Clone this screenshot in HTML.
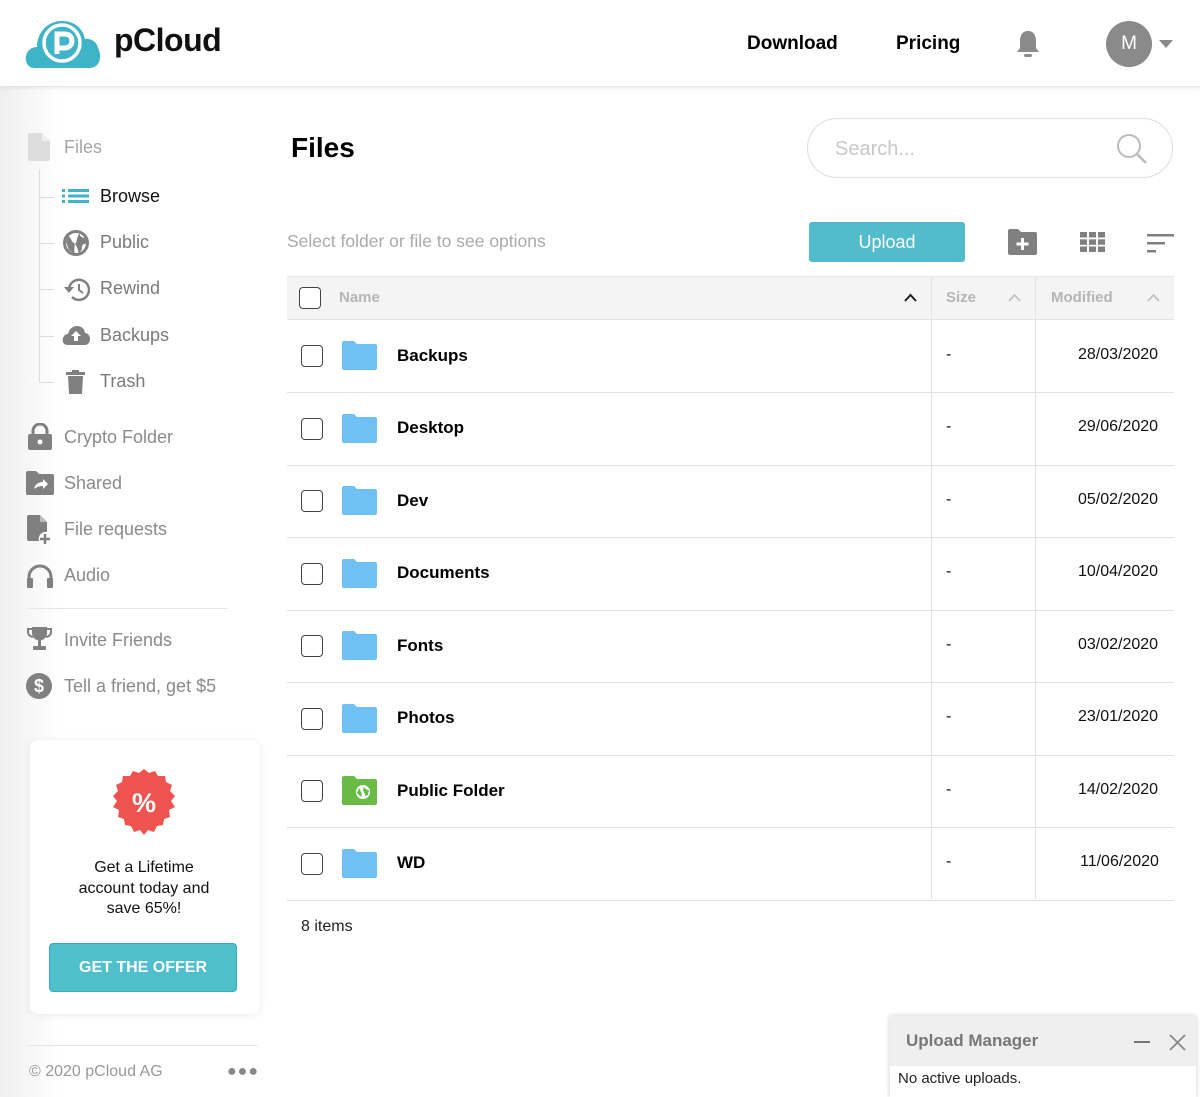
<!DOCTYPE html>
<html><head><meta charset="utf-8"><style>
*{margin:0;padding:0;box-sizing:border-box}
body{width:1200px;height:1097px;overflow:hidden;font-family:"Liberation Sans",sans-serif;background:#fff;position:relative;color:#000}
.a{position:absolute}
.hdr{left:0;top:0;width:1200px;height:87px;background:#fff;border-bottom:1px solid #e6e6e6;box-shadow:0 2px 3px rgba(0,0,0,.06);z-index:2}
.side{left:0;top:87px;width:60px;height:1010px;background:linear-gradient(90deg,#efefef,#fff)}
.nav{font-size:18px;color:#8a8a8a}
.nav.sub{color:#7a7a7a}
.th{font-size:15px;font-weight:bold;color:#b5b5b5}
.cb{width:22px;height:22px;border:1.5px solid #444;border-radius:4px;background:#fff}
.row{left:287px;width:887px;height:73px;border-bottom:1px solid #e3e3e3}
.fn{font-size:17px;font-weight:bold}
.dt{font-size:16px;color:#111}
</style></head><body>
<div class="a side"></div>
<div class="a hdr">
<svg class="a" style="left:25px;top:19px" width="76" height="50" viewBox="0 0 76 50"><path d="M10 49 C2 49 0 42 1 37 C2 31 7 28 12 28 C12 14 22 2 37 2 C50 2 58 10 60 20 C66 19 72 23 73 29 C76 34 76 42 72 46 C70 48 67 49 64 49 Z" fill="#3fb4c8"/><circle cx="37" cy="24" r="18" fill="none" stroke="#fff" stroke-width="3.5"/><path d="M32 35 V15 H39 C45 15 47 18 47 22 C47 26 44 29 39 29 H34" fill="none" stroke="#fff" stroke-width="5"/></svg>
<div class="a" style="left:114px;top:22px;font-size:32px;font-weight:bold;color:#111;letter-spacing:-0.5px">pCloud</div>
<div class="a" style="left:747px;top:33px;font-size:19px;font-weight:bold">Download</div>
<div class="a" style="left:896px;top:33px;font-size:19px;font-weight:bold">Pricing</div>
<svg class="a" style="left:1015px;top:29px" width="26" height="30" viewBox="0 0 26 30"><path d="M13 2 C7 2 5 7 5 12 V19 L2 23 H24 L21 19 V12 C21 7 19 2 13 2Z" fill="#8a8a8a"/><rect x="9" y="25" width="8" height="3" rx="1.5" fill="#8a8a8a"/></svg>
<div class="a" style="left:1106px;top:21px;width:46px;height:46px;border-radius:50%;background:#8a8a8a;color:#fff;font-size:19px;text-align:center;line-height:46px">M</div>
<svg class="a" style="left:1159px;top:40px" width="14" height="8"><path d="M0 0H14L7 8Z" fill="#8a8a8a"/></svg>
</div>

<!-- sidebar -->
<svg class="a" style="left:28px;top:133px" width="22" height="28"><path d="M2 0H14L22 8V26Q22 28 20 28H2Q0 28 0 26V2Q0 0 2 0Z" fill="#ddd"/><path d="M14 0V8H22" fill="#eee"/></svg>
<div class="a nav" style="left:64px;top:137px;color:#a5a5a5">Files</div>
<div class="a" style="left:39px;top:169px;width:1px;height:214px;background:#ddd"></div>
<div class="a" style="left:40px;top:197px;width:14px;height:1px;background:#ddd"></div>
<div class="a" style="left:40px;top:243px;width:14px;height:1px;background:#ddd"></div>
<div class="a" style="left:40px;top:289px;width:14px;height:1px;background:#ddd"></div>
<div class="a" style="left:40px;top:336px;width:14px;height:1px;background:#ddd"></div>
<div class="a" style="left:40px;top:382px;width:14px;height:1px;background:#ddd"></div>
<svg class="a" style="left:62px;top:189px" width="27" height="14"><g fill="#3fb4c8"><rect x="0" y="0" width="3" height="3"/><rect x="0" y="5.5" width="3" height="3"/><rect x="0" y="11" width="3" height="3"/><rect x="6" y="0" width="21" height="3"/><rect x="6" y="5.5" width="21" height="3"/><rect x="6" y="11" width="21" height="3"/></g></svg>
<div class="a nav" style="left:100px;top:186px;color:#111">Browse</div>
<svg class="a" style="left:63px;top:230px" width="26" height="26" viewBox="0 0 26 26"><circle cx="13" cy="13" r="11.5" fill="none" stroke="#808080" stroke-width="3"/><path d="M5 6 C9 8 8 12 11 13 C13 15 10 19 12 24 L6 20 L3 12Z M17 3 C16 6 19 8 23 8 L24 14 C21 13 18 15 19 19 L16 24 C15 20 14 16 12 14 C15 11 13 7 17 3Z" fill="#808080"/></svg>
<div class="a nav sub" style="left:100px;top:232px">Public</div>
<svg class="a" style="left:63px;top:277px" width="27" height="25" viewBox="0 0 27 25"><path d="M6 12 A10 10 0 1 1 9 20" fill="none" stroke="#808080" stroke-width="2.5"/><path d="M1 10 L6 16 L11 10Z" fill="#808080"/><path d="M16 7 V13 L20 16" fill="none" stroke="#808080" stroke-width="2"/></svg>
<div class="a nav sub" style="left:100px;top:278px">Rewind</div>
<svg class="a" style="left:62px;top:325px" width="28" height="20" viewBox="0 0 28 20"><path d="M6 20 C1 20 0 16 1 13 C2 10 4 9 6 9 C7 4 11 1 15 1 C20 1 23 5 23 8 C26 8 28 11 28 14 C28 17 26 20 23 20Z" fill="#808080"/><path d="M14 6 L19 11 H16 V16 H12 V11 H9Z" fill="#fff"/></svg>
<div class="a nav sub" style="left:100px;top:325px">Backups</div>
<svg class="a" style="left:66px;top:370px" width="19" height="24"><rect x="0" y="2" width="19" height="3" fill="#808080"/><rect x="6" y="0" width="7" height="3" fill="#808080"/><path d="M2 6H17L16 24H3Z" fill="#808080"/></svg>
<div class="a nav sub" style="left:100px;top:371px">Trash</div>

<svg class="a" style="left:28px;top:423px" width="24" height="27"><path d="M5 12V8A7 7 0 0 1 19 8V12" fill="none" stroke="#808080" stroke-width="3"/><rect x="0" y="11" width="24" height="16" rx="2" fill="#808080"/><circle cx="12" cy="19" r="2.5" fill="#fff"/></svg>
<div class="a nav" style="left:64px;top:427px">Crypto Folder</div>
<svg class="a" style="left:26px;top:471px" width="28" height="24"><path d="M0 2Q0 0 2 0H10L13 3H26Q28 3 28 5V22Q28 24 26 24H2Q0 24 0 22Z" fill="#808080"/><path d="M8 18 C9 13 13 11 17 11 V8 L22 13 L17 18 V15 C13 15 11 16 8 18Z" fill="#fff"/></svg>
<div class="a nav" style="left:64px;top:473px">Shared</div>
<svg class="a" style="left:27px;top:515px" width="25" height="30"><path d="M2 0H13L20 7V17A7 7 0 0 0 12 26H2Q0 26 0 24V2Q0 0 2 0Z" fill="#808080"/><path d="M13 0V7H20" fill="#bbb"/><path d="M18 19V29M13 24H23" stroke="#808080" stroke-width="2.5"/></svg>
<div class="a nav" style="left:64px;top:519px">File requests</div>
<svg class="a" style="left:26px;top:564px" width="28" height="24"><path d="M3 18V13A11 11 0 0 1 25 13V18" fill="none" stroke="#808080" stroke-width="3"/><rect x="1" y="14" width="6" height="10" rx="1" fill="#808080"/><rect x="21" y="14" width="6" height="10" rx="1" fill="#808080"/></svg>
<div class="a nav" style="left:64px;top:565px">Audio</div>
<div class="a" style="left:28px;top:608px;width:200px;height:1px;background:#e6e6e6"></div>
<svg class="a" style="left:27px;top:627px" width="25" height="24"><path d="M5 0H20V6A7.5 7.5 0 0 1 5 6Z" fill="#808080"/><path d="M5 2H1V5Q1 9 6 10M20 2H24V5Q24 9 19 10" fill="none" stroke="#808080" stroke-width="2"/><rect x="11" y="12" width="3" height="7" fill="#808080"/><rect x="6" y="19" width="13" height="4" rx="1" fill="#808080"/></svg>
<div class="a nav" style="left:64px;top:630px">Invite Friends</div>
<div class="a" style="left:26px;top:673px;width:26px;height:26px;border-radius:50%;background:#808080;color:#fff;font-size:18px;font-weight:bold;text-align:center;line-height:26px">$</div>
<div class="a nav" style="left:64px;top:676px">Tell a friend, get $5</div>

<div class="a" style="left:30px;top:740px;width:230px;height:274px;background:#fff;border-radius:8px;box-shadow:0 1px 8px rgba(0,0,0,.08)"></div>
<svg class="a" style="left:109px;top:767px" width="70" height="70" viewBox="0 0 70 70"><polygon fill="#ef5350" points="35,0 40,4 46,2 49,7 56,7 57,13 63,16 61,22 66,27 62,32 66,38 60,41 61,48 55,50 54,56 48,57 45,63 39,61 35,66 31,61 25,63 22,57 16,56 15,50 9,48 10,41 4,38 8,32 4,27 9,22 7,16 13,13 14,7 21,7 24,2 30,4" transform="translate(0,2)"/><text x="35" y="45" font-size="27" font-weight="bold" fill="#fff" text-anchor="middle" font-family="Liberation Sans">%</text></svg>
<div class="a" style="left:30px;top:858px;width:228px;text-align:center;font-size:16px;line-height:20.5px;color:#111">Get a Lifetime<br>account today and<br>save 65%!</div>
<div class="a" style="left:49px;top:943px;width:188px;height:49px;background:#4fbfcc;border-radius:4px;border:1px solid #3aaab8;color:#fff;font-weight:bold;font-size:16px;text-align:center;line-height:47px">GET THE OFFER</div>
<div class="a" style="left:28px;top:1045px;width:230px;height:1px;background:#e6e6e6"></div>
<div class="a" style="left:29px;top:1063px;font-size:16px;color:#999">© 2020 pCloud AG</div>
<div class="a" style="left:227px;top:1063px;font-size:16px;color:#888;letter-spacing:1px">●●●</div>

<!-- main -->
<div class="a" style="left:291px;top:132px;font-size:28px;font-weight:bold">Files</div>
<div class="a" style="left:807px;top:118px;width:366px;height:60px;border:1px solid #ddd;border-radius:30px"></div>
<div class="a" style="left:835px;top:138px;font-size:20px;color:#c8c8c8">Search...</div>
<svg class="a" style="left:1116px;top:133px" width="32" height="32"><circle cx="13" cy="13" r="11" fill="none" stroke="#bbb" stroke-width="2"/><path d="M21 21L30 30" stroke="#bbb" stroke-width="2.5"/></svg>
<div class="a" style="left:287px;top:231px;font-size:17.5px;color:#aaa">Select folder or file to see options</div>
<div class="a" style="left:809px;top:222px;width:156px;height:40px;background:#52bccc;border-radius:3px;color:#fff;font-size:18px;text-align:center;line-height:40px">Upload</div>
<svg class="a" style="left:1008px;top:229px" width="29" height="26"><path d="M0 2Q0 0 2 0H10L13 3H27Q29 3 29 5V24Q29 26 27 26H2Q0 26 0 24Z" fill="#808080"/><path d="M14.5 9V21M8.5 15H20.5" stroke="#fff" stroke-width="3"/></svg>
<svg class="a" style="left:1080px;top:232px" width="25" height="20"><g fill="#808080"><rect x="0" y="0" width="7" height="5.5"/><rect x="9" y="0" width="7" height="5.5"/><rect x="18" y="0" width="7" height="5.5"/><rect x="0" y="7.3" width="7" height="5.5"/><rect x="9" y="7.3" width="7" height="5.5"/><rect x="18" y="7.3" width="7" height="5.5"/><rect x="0" y="14.5" width="7" height="5.5"/><rect x="9" y="14.5" width="7" height="5.5"/><rect x="18" y="14.5" width="7" height="5.5"/></g></svg>
<svg class="a" style="left:1147px;top:234px" width="27" height="19"><g fill="#808080"><rect x="0" y="0" width="27" height="2.5"/><rect x="0" y="8" width="18" height="2.5"/><rect x="0" y="16" width="9" height="2.5"/></g></svg>

<div class="a" style="left:287px;top:276px;width:887px;height:44px;background:#f4f4f4;border-top:1px solid #e6e6e6;border-bottom:1px solid #e3e3e3"></div>
<div class="a" style="left:931px;top:276px;width:1px;height:623px;background:#e3e3e3"></div>
<div class="a" style="left:1035px;top:276px;width:1px;height:623px;background:#e3e3e3"></div>
<div class="a cb" style="left:299px;top:287px"></div>
<div class="a th" style="left:339px;top:289px">Name</div>
<svg class="a" style="left:904px;top:293px" width="13" height="9"><path d="M1 8L6.5 2L12 8" fill="none" stroke="#222" stroke-width="2"/></svg>
<div class="a th" style="left:946px;top:289px">Size</div>
<svg class="a" style="left:1008px;top:293px" width="13" height="9"><path d="M1 8L6.5 2L12 8" fill="none" stroke="#bbb" stroke-width="1.5"/></svg>
<div class="a th" style="left:1051px;top:289px">Modified</div>
<svg class="a" style="left:1147px;top:293px" width="13" height="9"><path d="M1 8L6.5 2L12 8" fill="none" stroke="#bbb" stroke-width="1.5"/></svg>

<div class="a row" style="top:320px"></div>
<div class="a row" style="top:392.5px"></div>
<div class="a row" style="top:465px"></div>
<div class="a row" style="top:537.5px"></div>
<div class="a row" style="top:610px"></div>
<div class="a row" style="top:682.5px"></div>
<div class="a row" style="top:755px"></div>
<div class="a row" style="top:827.5px"></div>

<div class="a cb" style="left:301px;top:345px"></div><svg class="a" style="left:342px;top:341px" width="35" height="29"><path d="M0 2Q0 0 2 0H12L15 3H33Q35 3 35 5V27Q35 29 33 29H2Q0 29 0 27Z" fill="#6ec1f2"/></svg><div class="a fn" style="left:397px;top:346px">Backups</div><div class="a dt" style="left:946px;top:346px">-</div><div class="a dt" style="left:1078px;top:346px">28/03/2020</div>
<div class="a cb" style="left:301px;top:418px"></div><svg class="a" style="left:342px;top:414px" width="35" height="29"><path d="M0 2Q0 0 2 0H12L15 3H33Q35 3 35 5V27Q35 29 33 29H2Q0 29 0 27Z" fill="#6ec1f2"/></svg><div class="a fn" style="left:397px;top:418px">Desktop</div><div class="a dt" style="left:946px;top:418px">-</div><div class="a dt" style="left:1078px;top:418px">29/06/2020</div>
<div class="a cb" style="left:301px;top:490px"></div><svg class="a" style="left:342px;top:486px" width="35" height="29"><path d="M0 2Q0 0 2 0H12L15 3H33Q35 3 35 5V27Q35 29 33 29H2Q0 29 0 27Z" fill="#6ec1f2"/></svg><div class="a fn" style="left:397px;top:491px">Dev</div><div class="a dt" style="left:946px;top:491px">-</div><div class="a dt" style="left:1078px;top:491px">05/02/2020</div>
<div class="a cb" style="left:301px;top:563px"></div><svg class="a" style="left:342px;top:559px" width="35" height="29"><path d="M0 2Q0 0 2 0H12L15 3H33Q35 3 35 5V27Q35 29 33 29H2Q0 29 0 27Z" fill="#6ec1f2"/></svg><div class="a fn" style="left:397px;top:563px">Documents</div><div class="a dt" style="left:946px;top:563px">-</div><div class="a dt" style="left:1078px;top:563px">10/04/2020</div>
<div class="a cb" style="left:301px;top:635px"></div><svg class="a" style="left:342px;top:631px" width="35" height="29"><path d="M0 2Q0 0 2 0H12L15 3H33Q35 3 35 5V27Q35 29 33 29H2Q0 29 0 27Z" fill="#6ec1f2"/></svg><div class="a fn" style="left:397px;top:636px">Fonts</div><div class="a dt" style="left:946px;top:636px">-</div><div class="a dt" style="left:1078px;top:636px">03/02/2020</div>
<div class="a cb" style="left:301px;top:708px"></div><svg class="a" style="left:342px;top:704px" width="35" height="29"><path d="M0 2Q0 0 2 0H12L15 3H33Q35 3 35 5V27Q35 29 33 29H2Q0 29 0 27Z" fill="#6ec1f2"/></svg><div class="a fn" style="left:397px;top:708px">Photos</div><div class="a dt" style="left:946px;top:708px">-</div><div class="a dt" style="left:1078px;top:708px">23/01/2020</div>
<div class="a cb" style="left:301px;top:780px"></div><svg class="a" style="left:342px;top:776px" width="35" height="29"><path d="M0 2Q0 0 2 0H12L15 3H33Q35 3 35 5V27Q35 29 33 29H2Q0 29 0 27Z" fill="#6abb45"/><circle cx="21" cy="16" r="7" fill="#fff"/><path d="M17 12 C19 14 18 16 20 17 L19 21 L15 17Z M22 10 C22 12 24 14 27 14 L26 19 L23 20 C23 17 21 15 21 14Z" fill="#6abb45"/></svg><div class="a fn" style="left:397px;top:781px">Public Folder</div><div class="a dt" style="left:946px;top:781px">-</div><div class="a dt" style="left:1078px;top:781px">14/02/2020</div>
<div class="a cb" style="left:301px;top:853px"></div><svg class="a" style="left:342px;top:849px" width="35" height="29"><path d="M0 2Q0 0 2 0H12L15 3H33Q35 3 35 5V27Q35 29 33 29H2Q0 29 0 27Z" fill="#6ec1f2"/></svg><div class="a fn" style="left:397px;top:853px">WD</div><div class="a dt" style="left:946px;top:853px">-</div><div class="a dt" style="left:1080px;top:853px">11/06/2020</div>

<div class="a" style="left:301px;top:918px;font-size:16px;color:#222">8 items</div>

<div class="a" style="left:890px;top:1016px;width:306px;height:81px;background:#fff;box-shadow:0 0 5px rgba(0,0,0,.2)"></div>
<div class="a" style="left:890px;top:1016px;width:306px;height:50px;background:#efefef"></div>
<div class="a" style="left:906px;top:1031px;font-size:17px;font-weight:bold;color:#777">Upload Manager</div>
<div class="a" style="left:1134px;top:1041px;width:16px;height:2px;background:#777"></div>
<svg class="a" style="left:1169px;top:1034px" width="17" height="17"><path d="M1 1L16 16M16 1L1 16" stroke="#888" stroke-width="1.8"/></svg>
<div class="a" style="left:898px;top:1070px;font-size:15px;color:#222">No active uploads.</div>
</body></html>
